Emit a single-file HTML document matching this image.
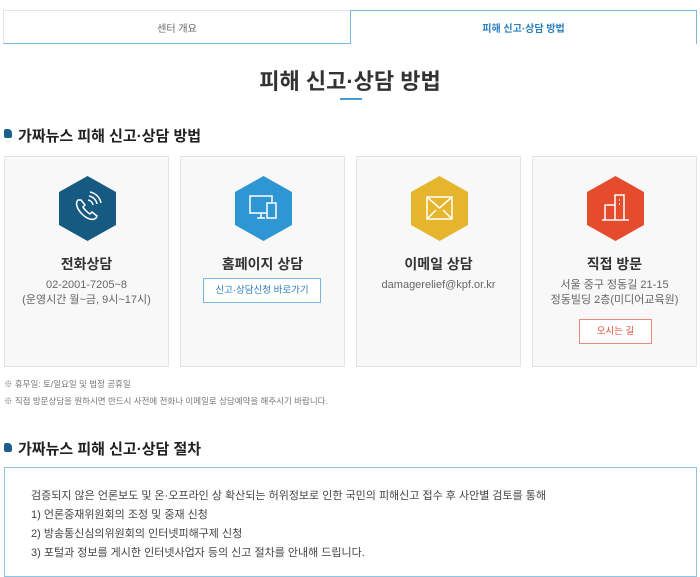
<!DOCTYPE html>
<html><head><meta charset="utf-8"><style>
*{margin:0;padding:0;box-sizing:border-box}
body{width:700px;height:564px;overflow:hidden;background:#fff;font-family:"Liberation Sans","Noto Sans CJK KR",sans-serif;color:#333;position:relative}
.a{position:absolute}
.tab{top:10px;height:34px;font-size:10px;display:flex;align-items:center;justify-content:center}
.card{top:156px;width:165px;height:211px;background:#f8f8f8;border:1px solid #e4e4e4;text-align:center}
.hex{position:absolute;left:54px;top:19px}
.ct{position:absolute;top:97px;width:100%;font-size:14px;font-weight:bold;color:#333}
.cx{position:absolute;top:121px;width:100%;font-size:11px;color:#666;line-height:15px}
.hd{left:18px;font-size:15px;font-weight:bold;color:#222}
.sq{left:4px;width:8px;height:9px;background:#1c5f8f;border-radius:2px 4px 2px 2px}
</style></head><body>
<div class="a tab" style="left:3px;width:348px;border:1px solid #e5e5e5;border-bottom:1px solid #7ab8e0;color:#666">센터 개요</div>
<div class="a tab" style="left:350px;width:347px;border:1px solid #7ab8e0;border-bottom:none;color:#2a7fbf;font-weight:bold">피해 신고·상담 방법</div>
<div class="a" style="top:64px;width:700px;text-align:center;font-size:22px;font-weight:bold;color:#333">피해 신고·상담 방법</div>
<div class="a" style="left:340px;top:98px;width:22px;height:2px;background:#4a9ad4"></div>

<div class="a sq" style="top:129px"></div>
<div class="a hd" style="top:125px">가짜뉴스 피해 신고·상담 방법</div>

<div class="a card" style="left:4px">
<svg class="hex" width="57" height="65" viewBox="0 0 57 65"><polygon points="28.5,0 57,16 57,49 28.5,65 0,49 0,16" fill="#165a82"/>
<path d="M19 24c-3 3-1 9 4 14s11 7 14 4l1-2-5-4-2 2c-2-1-6-5-7-7l2-2-4-5z" fill="none" stroke="#fff" stroke-width="1.5"/>
<path d="M29 24a6 6 0 0 1 5 5M30 20a10 10 0 0 1 8 8M31 16a14 14 0 0 1 11 11" fill="none" stroke="#fff" stroke-width="1.5"/></svg>
<div class="ct">전화상담</div>
<div class="cx">02-2001-7205~8<br>(운영시간 월~금, 9시~17시)</div></div>

<div class="a card" style="left:180px">
<svg class="hex" width="57" height="65" viewBox="0 0 57 65"><polygon points="28.5,0 57,16 57,49 28.5,65 0,49 0,16" fill="#2f96d4"/>
<rect x="15" y="20" width="22" height="17" fill="none" stroke="#fff" stroke-width="1.5"/><path d="M22 42h8M26 37v5" stroke="#fff" stroke-width="1.5"/>
<rect x="32" y="27" width="9" height="15" fill="#2f96d4" stroke="#fff" stroke-width="1.5"/></svg>
<div class="ct">홈페이지 상담</div>
<div class="a" style="left:22px;top:121px;width:118px;height:25px;border:1px solid #7ab8e0;background:#fff;font-size:9.5px;color:#2a7fbf;line-height:23px">신고·상담신청 바로가기</div></div>

<div class="a card" style="left:356px">
<svg class="hex" width="57" height="65" viewBox="0 0 57 65"><polygon points="28.5,0 57,16 57,49 28.5,65 0,49 0,16" fill="#e6b52e"/>
<rect x="16" y="21" width="25" height="22" fill="none" stroke="#fff" stroke-width="1.5"/><path d="M16 21l12.5 11L41 21M16 43l9-9M41 43l-9-9" fill="none" stroke="#fff" stroke-width="1.5"/></svg>
<div class="ct">이메일 상담</div>
<div class="cx">damagerelief@kpf.or.kr</div></div>

<div class="a card" style="left:532px">
<svg class="hex" width="57" height="65" viewBox="0 0 57 65"><polygon points="28.5,0 57,16 57,49 28.5,65 0,49 0,16" fill="#e54b2d"/>
<path d="M15 44h27M18 44V29h10v15M28 44V19h9v25M32 24h1M32 28h1" fill="none" stroke="#fff" stroke-width="1.5"/></svg>
<div class="ct">직접 방문</div>
<div class="cx">서울 중구 정동길 21-15<br>정동빌딩 2층(미디어교육원)</div>
<div class="a" style="left:46px;top:162px;width:73px;height:25px;border:1px solid #e88a7a;background:#fff;font-size:9.5px;color:#e0543a;line-height:23px">오시는 길</div></div>

<div class="a" style="left:4px;top:378px;font-size:8.5px;color:#777">※ 휴무일: 토/일요일 및 법정 공휴일</div>
<div class="a" style="left:4px;top:395px;font-size:8.5px;color:#777">※ 직접 방문상담을 원하시면 반드시 사전에 전화나 이메일로 상담예약을 해주시기 바랍니다.</div>

<div class="a sq" style="top:443px"></div>
<div class="a hd" style="top:438px">가짜뉴스 피해 신고·상담 절차</div>
<div class="a" style="left:4px;top:467px;width:693px;height:110px;border:1px solid #8cc4e6"></div>
<div class="a" style="left:31px;top:487px;font-size:11px;color:#444;line-height:19px">검증되지 않은 언론보도 및 온·오프라인 상 확산되는 허위정보로 인한 국민의 피해신고 접수 후 사안별 검토를 통해<br>1) 언론중재위원회의 조정 및 중재 신청<br>2) 방송통신심의위원회의 인터넷피해구제 신청<br>3) 포털과 정보를 게시한 인터넷사업자 등의 신고 절차를 안내해 드립니다.</div>
</body></html>
